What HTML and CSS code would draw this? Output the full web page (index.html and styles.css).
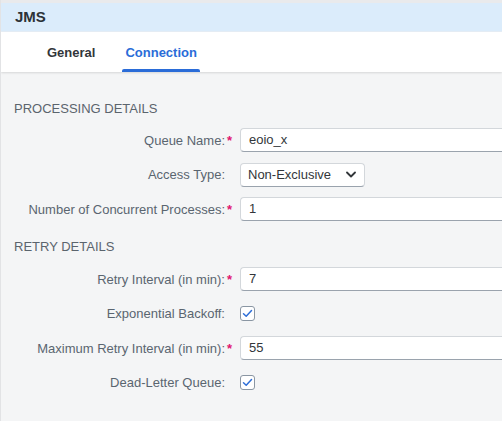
FILE: index.html
```html
<!DOCTYPE html>
<html>
<head>
<meta charset="utf-8">
<link rel="stylesheet" href="styles.css">
</head>
<body>
<div class="strip"></div>
<div class="header">JMS</div>
<div class="tabs">
  <div class="tab">General</div>
  <div class="tab active">Connection</div>
</div>
<div class="content">
  <div class="section-title">PROCESSING DETAILS</div>
  <div class="rows">
    <div class="row">
      <div class="label">Queue Name:<span class="req">*</span></div>
      <div class="input">eoio_x</div>
    </div>
    <div class="row">
      <div class="label">Access Type:<span class="req"></span></div>
      <div class="select">Non-Exclusive
        <svg class="chev" width="10" height="7" viewBox="0 0 10 7"><path d="M1 1.5 L5 5.5 L9 1.5" fill="none" stroke="#32363a" stroke-width="1.8" stroke-linecap="round" stroke-linejoin="round"/></svg>
      </div>
    </div>
    <div class="row">
      <div class="label">Number of Concurrent Processes:<span class="req">*</span></div>
      <div class="input">1</div>
    </div>
  </div>
  <div class="section-title second">RETRY DETAILS</div>
  <div class="rows">
    <div class="row">
      <div class="label">Retry Interval (in min):<span class="req">*</span></div>
      <div class="input">7</div>
    </div>
    <div class="row">
      <div class="label">Exponential Backoff:<span class="req"></span></div>
      <div class="checkbox"><svg width="11" height="9" viewBox="0 0 11 9"><path d="M1.5 4.8 L4.2 7.3 L9.5 1.5" fill="none" stroke="#2f6fd8" stroke-width="1.5" stroke-linecap="round" stroke-linejoin="round"/></svg></div>
    </div>
    <div class="row">
      <div class="label">Maximum Retry Interval (in min):<span class="req">*</span></div>
      <div class="input">55</div>
    </div>
    <div class="row">
      <div class="label">Dead-Letter Queue:<span class="req"></span></div>
      <div class="checkbox"><svg width="11" height="9" viewBox="0 0 11 9"><path d="M1.5 4.8 L4.2 7.3 L9.5 1.5" fill="none" stroke="#2f6fd8" stroke-width="1.5" stroke-linecap="round" stroke-linejoin="round"/></svg></div>
    </div>
  </div>
</div>
</body>
</html>
```
FILE: styles.css
```css
html, body {
  margin: 0;
  padding: 0;
}
body {
  width: 502px;
  height: 421px;
  overflow: hidden;
  background: #f4f5f6;
  font-family: "Liberation Sans", Arial, sans-serif;
  color: #32363a;
  border-left: 1px solid #e2e3e5;
  box-sizing: border-box;
}
.strip {
  height: 3px;
  background: #e9eaec;
}
.header {
  height: 28px;
  line-height: 28px;
  background: #dbecfb;
  padding-left: 14px;
  font-weight: bold;
  font-size: 15px;
  color: #2c3237;
  border-bottom: 1px solid #e6eef6;
}
.tabs {
  height: 40px;
  background: #fff;
  display: flex;
  padding-left: 31px;
  box-shadow: 0 1px 2px rgba(0,0,0,0.12);
  position: relative;
}
.tab {
  font-weight: bold;
  font-size: 13px;
  padding: 1px 15px 0;
  line-height: 40px;
  height: 40px;
  box-sizing: border-box;
  color: #32363a;
  position: relative;
}
.tab.active {
  color: #2a6cd8;
}
.tab.active::after {
  content: "";
  position: absolute;
  left: 12px;
  right: 12px;
  bottom: 0;
  height: 3px;
  border-radius: 2px 2px 0 0;
  background: #2a6cd8;
}
.content {
  padding: 29px 0 0 13px;
}
.section-title {
  height: 16px;
  line-height: 16px;
  font-size: 13px;
  color: #5b646d;
  margin-bottom: 11px;
}
.section-title.second {
  margin-top: 18px;
  margin-bottom: 12px;
}
.rows {
  display: flex;
  flex-direction: column;
  gap: 10.5px;
}
.row {
  display: flex;
  align-items: center;
  height: 24px;
}
.label {
  width: 220px;
  flex: none;
  text-align: right;
  font-size: 13px;
  color: #5a6570;
  white-space: nowrap;
}
.req {
  display: inline-block;
  width: 9px;
  text-align: center;
  color: #e0146e;
  font-weight: bold;
}
.input {
  margin-left: 6px;
  flex: 1;
  height: 24px;
  box-sizing: border-box;
  background: #fff;
  border: 1px solid #d3d7db;
  border-bottom-color: #9aa3ad;
  border-right: none;
  border-radius: 4px 0 0 4px;
  padding-left: 8px;
  font-size: 13px;
  line-height: 22px;
  color: #32363a;
}
.select {
  margin-left: 6px;
  width: 125px;
  height: 24px;
  box-sizing: border-box;
  background: #fff;
  border: 1px solid #d3d7db;
  border-bottom-color: #9aa3ad;
  border-radius: 4px;
  padding-left: 7px;
  font-size: 13px;
  line-height: 22px;
  display: flex;
  align-items: center;
  gap: 15px;
}
.chev {
  flex: none;
}
.checkbox {
  margin-left: 6px;
  width: 15px;
  height: 15px;
  box-sizing: border-box;
  border: 1.5px solid #8a96a3;
  border-radius: 3px;
  background: #fff;
  display: flex;
  align-items: center;
  justify-content: center;
}
```
